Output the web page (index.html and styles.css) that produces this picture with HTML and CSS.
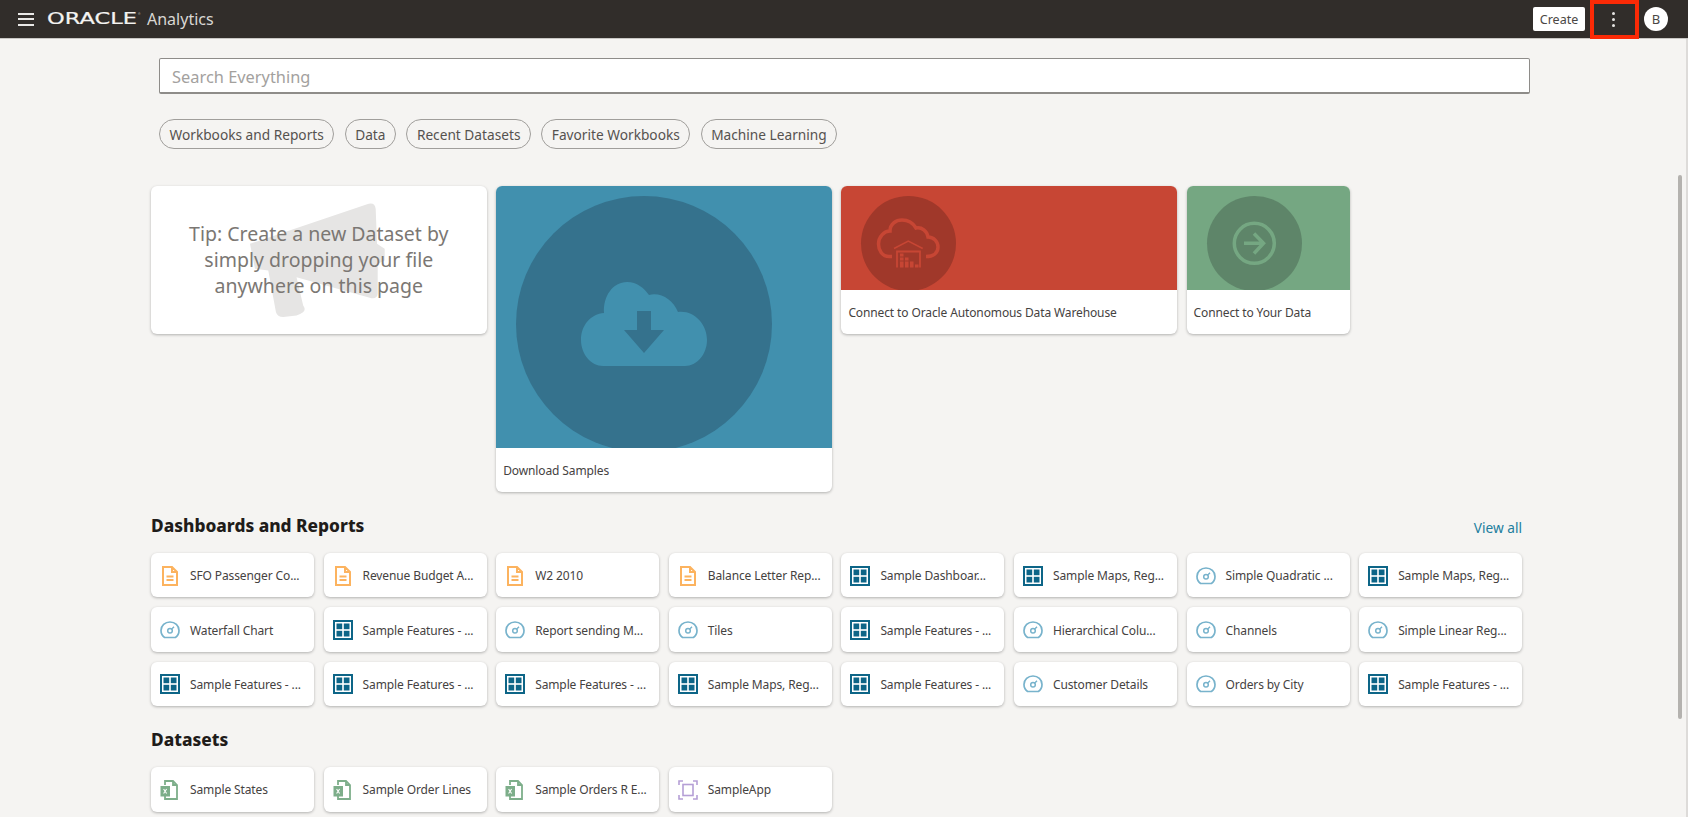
FILE: index.html
```html
<!DOCTYPE html>
<html lang="en">
<head>
<meta charset="utf-8">
<title>Oracle Analytics</title>
<link rel="stylesheet" href="styles.css">
</head>
<body>
<svg class="sprite" width="0" height="0" aria-hidden="true">
  <symbol id="i-report" viewBox="0 0 20 20">
    <path d="M3 1h9l5 5v13H3z M12 1v5h5 M6.500 10.500h7 M6.500 14h7" fill="none" stroke="#fcb35f" stroke-width="2"/>
  </symbol>
  <symbol id="i-dash" viewBox="0 0 20 20">
    <rect width="20" height="20" fill="#0d6587"/>
    <rect x="2" y="2" width="16" height="16" fill="#fff"/>
    <rect x="3.500" y="3.500" width="5.700" height="5.700" fill="#0d6587"/>
    <rect x="10.800" y="3.500" width="5.700" height="5.700" fill="#0d6587"/>
    <rect x="3.500" y="10.800" width="5.700" height="5.700" fill="#0d6587"/>
    <rect x="10.800" y="10.800" width="5.700" height="5.700" fill="#0d6587"/>
  </symbol>
  <symbol id="i-gauge" viewBox="0 0 20 20">
    <path d="M4.600 17.500h10.800C17.600 16 19 13.300 19 10.500 19 5.800 15 2 10 2S1 5.800 1 10.500c0 2.800 1.400 5.500 3.600 7z" fill="none" stroke="#78b3cc" stroke-width="1.700"/>
    <circle cx="10" cy="10.800" r="2.300" fill="none" stroke="#78b3cc" stroke-width="1.500"/>
    <path d="M11.500 9.300 14 6.800" fill="none" stroke="#78b3cc" stroke-width="1.500"/>
  </symbol>
  <symbol id="i-excel" viewBox="0 0 20 20">
    <path d="M5 5V1h8l4 4v14H5v-3 M13 1v4h4" fill="none" stroke="#7dae8a" stroke-width="1.800"/>
    <rect x="0.500" y="6" width="9.500" height="10.500" fill="#7dae8a"/>
    <path d="M3.600 9l3 4.500 M6.600 9l-3 4.500" stroke="#fff" stroke-width="1.100" fill="none"/>
  </symbol>
  <symbol id="i-app" viewBox="0 0 20 20">
    <path d="M1 5V1h4 M15 1h4v4 M19 15v4h-4 M5 19H1v-4" fill="none" stroke="#b59fd6" stroke-width="1.600"/>
    <rect x="5" y="4.500" width="10" height="11" fill="none" stroke="#b59fd6" stroke-width="1.600"/>
  </symbol>
</svg>
<header class="topbar">
  <button class="burger" aria-label="Menu"><span></span><span></span><span></span></button>
  <div class="logo"><span class="logo-word">ORACLE</span><span class="logo-mark">®</span></div>
  <div class="product">Analytics</div>
  <div class="spacer"></div>
  <button class="create">Create</button>
  <button class="kebab" aria-label="More"><i></i><i></i><i></i></button>
  <div class="avatar">B</div>
</header>

<main class="page">
  <div class="search">Search Everything</div>
  <nav class="pills">
    <span class="pill">Workbooks and Reports</span>
    <span class="pill">Data</span>
    <span class="pill">Recent Datasets</span>
    <span class="pill">Favorite Workbooks</span>
    <span class="pill">Machine Learning</span>
  </nav>

  <section class="hero">
    <article class="card tip">
      <svg class="megaphone" viewBox="300 50 460 380"><path d="M330 190 680 72Q705 62 708 85L712 190 735 205V240L714 250V340Q712 358 690 352L470 290 490 375Q505 395 470 405L430 410Q412 410 408 395L385 270 345 265Z" fill="#e6e5e4"/></svg>
      <p class="tip-text">Tip: Create a new Dataset by simply dropping your file anywhere on this page</p>
    </article>
    <article class="card big">
      <div class="art art-blue">
        <div class="disc disc-big">
          <svg width="126" height="84" viewBox="0 0 126 84"><path d="M22 84C10 84 0 72 0 58 0 43 10 32 23 31 22 14 32 0 46 0 56 0 63 6 68 13 80 10 92 18 97 30 113 28 126 42 126 58 126 72 116 84 104 84Z" fill="#4190ae"/><path d="M56 29H70V48H83L63 71 43 48H56Z" fill="#35728d"/></svg>
        </div>
      </div>
      <div class="label">Download Samples</div>
    </article>
    <article class="card wide">
      <div class="art art-red">
        <div class="disc disc-red">
          <svg width="95" height="95" viewBox="0 0 95 95">
            <path d="M31 60.500H28C21 60.500 17.500 54 17.500 48 17.500 41 23 35 29 35 29 28 35 24 41 24 47 24 52 27 55 32 61 31 66 35 67 41 73 41 77 46 77 51 77 57 72 60.500 65 60.500" fill="none" stroke="#c74634" stroke-width="3.500"/>
            <path d="M33 52.500 47.300 45 61.700 52.500" fill="none" stroke="#c74634" stroke-width="1.500"/>
            <path d="M36 71.500V55.500H59V71.500" fill="none" stroke="#c74634" stroke-width="1.800"/>
            <path d="M39 57.500h3.500v3H39zM39 61.500h3.500v3H39zM39 65.500h3.500v3H39zM39 68.500h3.500v3H39zM44 61.500h3.500v3H44zM44 65.500h3.500v3H44zM44 68.500h3.500v3H44zM49 65.500h3.500v3H49zM49 68.500h3.500v3H49zM54 68.500h3.500v3H54z" fill="#c74634"/>
          </svg>
        </div>
      </div>
      <div class="label">Connect to Oracle Autonomous Data Warehouse</div>
    </article>
    <article class="card narrow">
      <div class="art art-green">
        <div class="disc disc-green">
          <svg width="95" height="95" viewBox="0 0 95 95">
            <circle cx="47.300" cy="47.300" r="20" fill="none" stroke="#75a782" stroke-width="3.500"/>
            <path d="M37 47.300H55 M47 37.500 56.500 47.300 47 57.500" fill="none" stroke="#75a782" stroke-width="3.500"/>
          </svg>
        </div>
      </div>
      <div class="label">Connect to Your Data</div>
    </article>
  </section>

  <div class="section-head">
    <h2>Dashboards and Reports</h2>
    <a class="view-all">View all</a>
  </div>
  <section class="tiles">
    <a class="tile"><svg class="ico"><use href="#i-report"/></svg><span>SFO Passenger Co...</span></a>
    <a class="tile"><svg class="ico"><use href="#i-report"/></svg><span>Revenue Budget A...</span></a>
    <a class="tile"><svg class="ico"><use href="#i-report"/></svg><span>W2 2010</span></a>
    <a class="tile"><svg class="ico"><use href="#i-report"/></svg><span>Balance Letter Rep...</span></a>
    <a class="tile"><svg class="ico"><use href="#i-dash"/></svg><span>Sample Dashboar...</span></a>
    <a class="tile"><svg class="ico"><use href="#i-dash"/></svg><span>Sample Maps, Reg...</span></a>
    <a class="tile"><svg class="ico"><use href="#i-gauge"/></svg><span>Simple Quadratic ...</span></a>
    <a class="tile"><svg class="ico"><use href="#i-dash"/></svg><span>Sample Maps, Reg...</span></a>

    <a class="tile"><svg class="ico"><use href="#i-gauge"/></svg><span>Waterfall Chart</span></a>
    <a class="tile"><svg class="ico"><use href="#i-dash"/></svg><span>Sample Features - ...</span></a>
    <a class="tile"><svg class="ico"><use href="#i-gauge"/></svg><span>Report sending M...</span></a>
    <a class="tile"><svg class="ico"><use href="#i-gauge"/></svg><span>Tiles</span></a>
    <a class="tile"><svg class="ico"><use href="#i-dash"/></svg><span>Sample Features - ...</span></a>
    <a class="tile"><svg class="ico"><use href="#i-gauge"/></svg><span>Hierarchical Colu...</span></a>
    <a class="tile"><svg class="ico"><use href="#i-gauge"/></svg><span>Channels</span></a>
    <a class="tile"><svg class="ico"><use href="#i-gauge"/></svg><span>Simple Linear Reg...</span></a>

    <a class="tile"><svg class="ico"><use href="#i-dash"/></svg><span>Sample Features - ...</span></a>
    <a class="tile"><svg class="ico"><use href="#i-dash"/></svg><span>Sample Features - ...</span></a>
    <a class="tile"><svg class="ico"><use href="#i-dash"/></svg><span>Sample Features - ...</span></a>
    <a class="tile"><svg class="ico"><use href="#i-dash"/></svg><span>Sample Maps, Reg...</span></a>
    <a class="tile"><svg class="ico"><use href="#i-dash"/></svg><span>Sample Features - ...</span></a>
    <a class="tile"><svg class="ico"><use href="#i-gauge"/></svg><span>Customer Details</span></a>
    <a class="tile"><svg class="ico"><use href="#i-gauge"/></svg><span>Orders by City</span></a>
    <a class="tile"><svg class="ico"><use href="#i-dash"/></svg><span>Sample Features - ...</span></a>
  </section>

  <div class="section-head section-head-2">
    <h2>Datasets</h2>
  </div>
  <section class="tiles">
    <a class="tile"><svg class="ico"><use href="#i-excel"/></svg><span>Sample States</span></a>
    <a class="tile"><svg class="ico"><use href="#i-excel"/></svg><span>Sample Order Lines</span></a>
    <a class="tile"><svg class="ico"><use href="#i-excel"/></svg><span>Sample Orders R E...</span></a>
    <a class="tile"><svg class="ico"><use href="#i-app"/></svg><span>SampleApp</span></a>
  </section>
</main>
<div class="scrolltrack"></div>
<div class="scrollthumb"></div>
</body>
</html>
```

FILE: styles.css
```css
* { box-sizing: border-box; }
html, body { margin: 0; padding: 0; height: 817px; overflow: hidden; }
body {
  background: #f5f4f2;
  font-family: "Noto Sans", "Open Sans", sans-serif;
  color: #3f3c3a;
  position: relative;
}
.sprite { position: absolute; }

.topbar {
  height: 39px;
  background: #312d2a;
  border-bottom: 1px solid #c9c7c4;
  display: flex;
  align-items: center;
  padding: 0 20px 0 18px;
}
.burger {
  width: 16px;
  height: 13px;
  padding: 0;
  border: 0;
  background: none;
  display: flex;
  flex-direction: column;
  justify-content: space-between;
  margin-right: 13px;
}
.burger span { display: block; height: 2px; background: #e9e8e6; }
.logo { width: 89px; height: 14px; margin-right: 11px; display: flex; align-items: center; position: relative; }
.logo-word {
  font-family: "DejaVu Sans", sans-serif;
  font-size: 15px;
  font-weight: 400;
  color: #f4f3f1;
  line-height: 14px;
  transform: scaleX(1.5);
  transform-origin: left center;
  white-space: nowrap;
  -webkit-text-stroke: 0.2px #f4f3f1;
}
.logo-mark { position: absolute; left: 91px; top: 0; font-size: 3px; line-height: 4px; color: #bdbbb8; }
.product { font-size: 16px; color: #d9d7d4; }
.spacer { flex: 1; }
.create {
  width: 52px;
  height: 24px;
  background: #fff;
  border: 0;
  border-radius: 2px;
  font: 12.5px "Noto Sans", sans-serif;
  color: #4a4744;
  padding: 0;
  margin-right: 5px;
}
.kebab {
  width: 49px;
  height: 39px;
  margin-top: 1px;
  background: none;
  border: 4px solid #fb2a06;
  display: flex;
  flex-direction: column;
  align-items: center;
  justify-content: center;
  gap: 3px;
  padding: 0 3px 0 0;
  margin-right: 5px;
}
.kebab i { width: 3px; height: 3px; background: #e6e5e3; border-radius: 50%; }
.avatar {
  width: 24px;
  height: 24px;
  border-radius: 50%;
  background: #fff;
  color: #4a4744;
  font-size: 13px;
  display: flex;
  align-items: center;
  justify-content: center;
}

.page { padding: 19px 0 0 151px; width: 1523px; }

.search {
  margin-left: 8px;
  width: 1371px;
  height: 36px;
  background: #fff;
  border: 1px solid #8e8c89;
  border-bottom-width: 2px;
  border-radius: 2px;
  padding-left: 12px;
  font-size: 16.400px;
  line-height: 36px;
  color: #a3a19e;
}

.pills { display: flex; gap: 10.400px; margin: 25px 0 0 8px; }
.pill {
  height: 30px;
  padding: 0 9.500px;
  border: 1px solid #a09e9b;
  border-radius: 15px;
  font-size: 13.700px;
  line-height: 30px;
  color: #55524f;
  white-space: nowrap;
}

.hero {
  display: grid;
  grid-template-columns: repeat(8, 163px);
  column-gap: 9.600px;
  align-items: start;
  margin-top: 37px;
}
.card {
  background: #fff;
  border-radius: 6px;
  box-shadow: 0 1px 3px rgba(0,0,0,.28);
  overflow: hidden;
}
.tip { grid-column: span 2; height: 148px; position: relative; display: flex; align-items: center; justify-content: center; }
.megaphone { position: absolute; left: 89px; top: 11px; width: 153px; height: 127px; }
.tip-text {
  position: relative;
  margin: 0;
  width: 280px;
  text-align: center;
  font-size: 19.500px;
  line-height: 26px;
  color: #7b7773;
}
.big, .wide { grid-column: span 2; }
.narrow { grid-column: span 1; }
.art { display: flex; padding: 10px 0 0 20px; overflow: hidden; }
.big .art { height: 262px; }
.wide .art, .narrow .art { height: 104px; }
.art-blue { background: #4190ae; }
.art-red { background: #c74634; }
.art-green { background: #75a782; }
.disc { border-radius: 50%; flex: none; display: flex; align-items: center; justify-content: center; width: 95px; height: 95px; }
.disc-big { width: 256px; height: 256px; background: #35728d; }
.disc-red { background: #a0382a; }
.disc-green { background: #5e8569; }
.label {
  height: 44px;
  padding: 0 7px;
  font-size: 12px;
  letter-spacing: -0.12px;
  line-height: 45px;
  color: #45423f;
  white-space: nowrap;
}

.section-head {
  display: flex;
  align-items: flex-end;
  justify-content: space-between;
  height: 26px;
  margin-top: 21px;
  margin-bottom: 14px;
}
.section-head-2 { margin-top: 21px; }
h2 { margin: 0; font-size: 17.300px; font-weight: 800; line-height: 26px; color: #1f1c1a; }
.view-all { font-size: 13.700px; color: #227e9e; line-height: 22px; padding-right: 1px; }

.tiles {
  display: grid;
  grid-template-columns: repeat(8, 163px);
  gap: 10px 9.600px;
}
.tile {
  height: 44.400px;
  display: flex;
  align-items: center;
  gap: 10px;
  padding: 1px 0 0 9px;
  background: #fff;
  border-radius: 6px;
  box-shadow: 0 1px 3px rgba(0,0,0,.28);
  font-size: 12px;
  letter-spacing: -0.12px;
  color: #45423f;
  white-space: nowrap;
  overflow: hidden;
}
.ico { width: 20px; height: 20px; flex: none; }

.scrolltrack { position: absolute; right: 0; top: 39px; bottom: 0; width: 2px; background: #dddbd9; }
.scrollthumb { position: absolute; left: 1678px; top: 175px; width: 4px; height: 544px; background: #b4b2af; border-radius: 2px; }
```
